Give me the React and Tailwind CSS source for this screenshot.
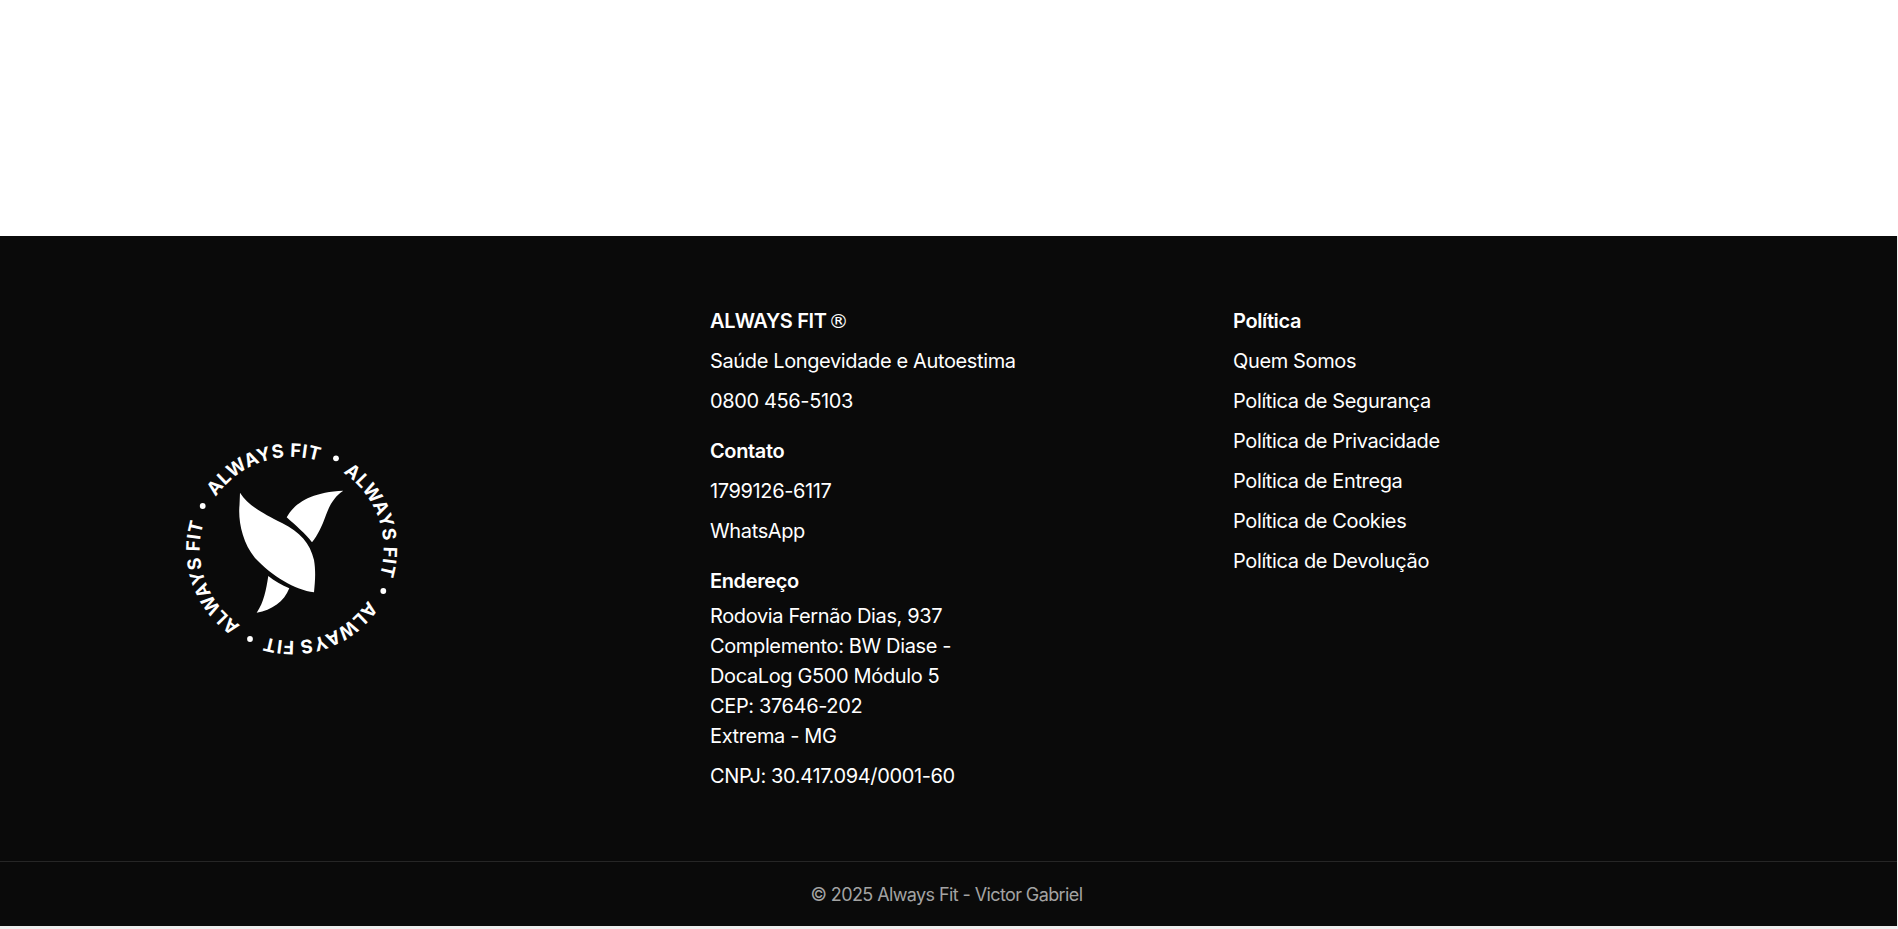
const font = "font-['Inter',sans-serif]";

function Logo() {
  const cx = 131.7;
  const cy = 119;
  return (
    <svg viewBox="0 0 260 250" className="w-[260px] h-[250px] shrink-0 mt-[13px]" aria-label="Always Fit">
      <defs>
        <path id="ring" d={`M ${cx - 92} ${cy} A 92 92 0 0 1 ${cx + 92} ${cy}`} />
      </defs>
      {[-19, 70.5, 160.5, 250.5].map((a) => (
        <text
          key={a}
          transform={`rotate(${a} ${cx} ${cy})`}
          fill="#fff"
          fontFamily="'Inter', sans-serif"
          fontWeight="700"
          fontSize="18.5"
          letterSpacing="0.5"
          textAnchor="middle"
        >
          <textPath href="#ring" startOffset="50%">ALWAYS FIT</textPath>
        </text>
      ))}
      <circle cx="176" cy="28.3" r="2.9" fill="#fff" />
      <circle cx="223.3" cy="161" r="2.9" fill="#fff" />
      <circle cx="90" cy="209" r="2.9" fill="#fff" />
      <circle cx="42.7" cy="76" r="2.9" fill="#fff" />
      <path fill="#fff" d="M80 62.7C88 75 100 82 122 93C140 102 150 113 154 130C156 142 155 152 154 162.3C135 160 112 146 95 128C82 112 78 90 79.5 75Z" />
      <path fill="#fff" d="M183.3 60.7C175 66 170 74 166 85C162 96 158 105 152 112.3C145 103 135 95 126.7 87.3C134 74 150 62 183.3 60.7Z" />
      <path fill="#fff" d="M108.3 146C114 151 122 155 129.3 158.3C124 172 112 180 96.7 182.7C104 172 106 160 108.3 146Z" />
    </svg>
  );
}

const Head = ({ children, className = "" }) => (
  <h3 className={`text-[20px] leading-[30px] font-semibold ${className}`}>{children}</h3>
);
const Line = ({ children }) => <p className="mt-[10px] text-[20px] leading-[30px]">{children}</p>;

export default function App() {
  return (
    <div className={`min-h-[929px] bg-[#eeeeee] ${font}`}>
      <div className="h-[236px] bg-white" />
      <footer className="mr-px bg-[#0a0a0a] text-white tracking-[-0.37px]">
        <div className="flex items-center pl-[160px] pt-[70px] pb-[70px]">
          <Logo />
          <div className="ml-[290px] w-[523px] self-start">
            <Head>
              ALWAYS FIT<span className="ml-[2px] font-['DejaVu_Sans',sans-serif] font-normal">®</span>
            </Head>
            <Line>Saúde Longevidade e Autoestima</Line>
            <Line>0800 456-5103</Line>
            <Head className="mt-[20px]">Contato</Head>
            <Line>1799126-6117</Line>
            <Line>WhatsApp</Line>
            <Head className="mt-[20px]">Endereço</Head>
            <p className="mt-[5px] text-[20px] leading-[30px] w-[290px]">
              Rodovia Fernão Dias, 937
              <br />
              Complemento: BW Diase -
              <br />
              DocaLog G500 Módulo 5
              <br />
              CEP: 37646-202
              <br />
              Extrema - MG
            </p>
            <Line>CNPJ: 30.417.094/0001-60</Line>
          </div>
          <div className="self-start">
            <Head>Política</Head>
            <Line>Quem Somos</Line>
            <Line>Política de Segurança</Line>
            <Line>Política de Privacidade</Line>
            <Line>Política de Entrega</Line>
            <Line>Política de Cookies</Line>
            <Line>Política de Devolução</Line>
          </div>
        </div>
        <div className="h-[65px] border-t border-[#262626] flex items-center justify-center text-[18px] tracking-[-0.6px] text-[#a3a3a3]">
          <span className="mr-[4px]">© 2025 Always Fit - Victor Gabriel</span>
        </div>
      </footer>
    </div>
  );
}
